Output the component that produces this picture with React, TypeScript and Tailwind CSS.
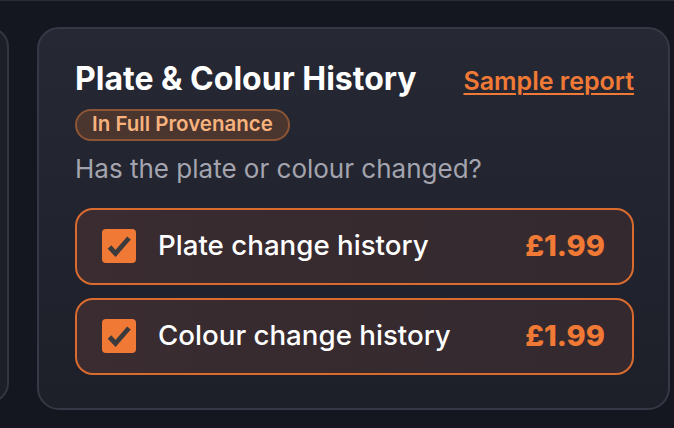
import React from "react";

function Check() {
  return (
    <div className="w-[34px] h-[34px] rounded-[4px] bg-[#f07a35] flex items-center justify-center shrink-0">
      <svg width="34" height="34" viewBox="0 0 34 34">
        <path d="M7.5 18 L13.5 24.5 L27 9" fill="none" stroke="#3b3b3d" strokeWidth="4.8" strokeLinejoin="miter" strokeLinecap="butt" />
      </svg>
    </div>
  );
}

function Row({ label }: { label: string }) {
  return (
    <div className="h-[77px] rounded-[18px] border-2 border-[#d96b2f] bg-gradient-to-r from-[#3a2c31] to-[#33292e] flex items-center pl-[25px] pr-[27px]">
      <Check />
      <span className="ml-[22px] text-[27.7px] font-medium text-white">{label}</span>
      <span className="ml-auto text-[29px] font-extrabold text-[#f07a35]">£1.99</span>
    </div>
  );
}

export default function App() {
  return (
    <div
      className="w-[674px] h-[428px] bg-[#151720] overflow-hidden flex items-start pt-[26px] border-t border-[#2a2c36]"
      style={{ fontFamily: "Inter, 'Noto Sans', sans-serif" }}
    >
      <div className="-ml-[300px] w-[309px] h-[376px] shrink-0 rounded-[20px] border-2 border-[#33353f] bg-[#1c1e28]" />
      <div className="ml-[28px] w-[633px] h-[383px] shrink-0 rounded-[22px] border-2 border-[#363945] bg-gradient-to-b from-[#262834] to-[#1d1f29] pl-[36px] pr-[34px] pt-[32px]">
        <div className="flex items-baseline justify-between">
          <h1 className="text-[32px] font-bold text-white leading-[36px]">Plate &amp; Colour History</h1>
          <a className="text-[25px] font-semibold text-[#f07a35] underline underline-offset-[3px] decoration-2">Sample report</a>
        </div>
        <div className="mt-[8px] inline-flex h-[32px] items-center rounded-full border-2 border-[#8c5535] bg-[#4a352f] px-[15px] text-[20.5px] font-semibold text-[#f7b27d]">
          In Full Provenance
        </div>
        <p className="mt-[13px] text-[26px] text-[#a4a4ae] leading-[30px]">Has the plate or colour changed?</p>
        <div className="mt-[24px] flex flex-col gap-[13px]">
          <Row label="Plate change history" />
          <Row label="Colour change history" />
        </div>
      </div>
    </div>
  );
}
